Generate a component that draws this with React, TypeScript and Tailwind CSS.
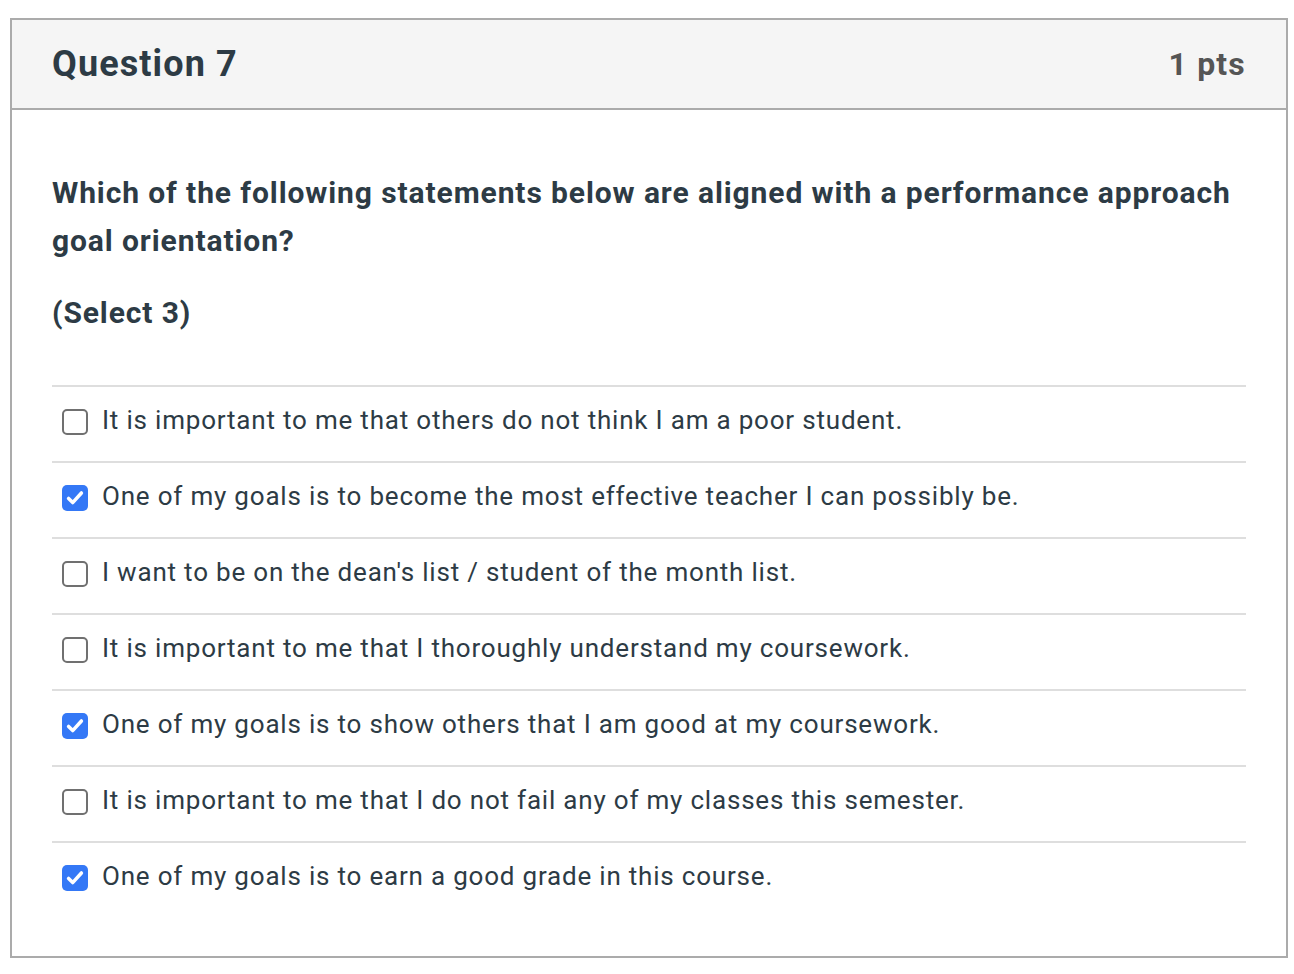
const options = [
  { text: "It is important to me that others do not think I am a poor student.", checked: false },
  { text: "One of my goals is to become the most effective teacher I can possibly be.", checked: true },
  { text: "I want to be on the dean's list / student of the month list.", checked: false },
  { text: "It is important to me that I thoroughly understand my coursework.", checked: false },
  { text: "One of my goals is to show others that I am good at my coursework.", checked: true },
  { text: "It is important to me that I do not fail any of my classes this semester.", checked: false },
  { text: "One of my goals is to earn a good grade in this course.", checked: true },
];

function Checkbox({ checked }: { checked: boolean }) {
  if (checked) {
    return (
      <span className="grid h-[26px] w-[26px] shrink-0 place-items-center rounded-[5px] bg-[#3478f6]">
        <svg viewBox="0 0 24 24" className="h-[22px] w-[22px]" fill="none">
          <path
            d="M5 12.5l4.5 4.5L19 6.5"
            stroke="white"
            strokeWidth="3.8"
            strokeLinecap="round"
            strokeLinejoin="round"
          />
        </svg>
      </span>
    );
  }
  return (
    <span className="h-[26px] w-[26px] shrink-0 rounded-[5px] border-2 border-[#707070] bg-white" />
  );
}

export default function App() {
  return (
    <div
      className="min-h-screen bg-white pl-[10px] pt-[18px]"
      style={{ fontFamily: "Roboto, 'Liberation Sans', sans-serif" }}
    >
      <div className="w-[1278px] border-2 border-[#ababab] text-[#2d3b45]">
        <div className="flex h-[90px] items-center justify-between border-b-2 border-[#ababab] bg-[#f5f5f5] px-[40px]">
          <h2 className="text-[36px] font-bold leading-none tracking-[1.1px]">Question 7</h2>
          <span className="text-[32px] font-bold leading-none tracking-[1.2px] text-[#555]">1 pts</span>
        </div>
        <div className="px-[40px] pb-[39px] pt-[59px]">
          <p className="text-[30px] font-bold leading-[48px] tracking-[0.9px]">
            Which of the following statements below are aligned with a performance approach goal orientation?
          </p>
          <p className="mt-[24px] text-[30px] font-bold leading-[48px] tracking-[0.9px]">(Select 3)</p>
          <ul className="mt-[48px]">
            {options.map((o) => (
              <li
                key={o.text}
                className="flex h-[76px] items-center gap-[14px] border-t-2 border-[#dedede] pb-[5px] pl-[10px]"
              >
                <Checkbox checked={o.checked} />
                <span className="relative -top-[2px] text-[26px] leading-none tracking-[0.8px]">{o.text}</span>
              </li>
            ))}
          </ul>
        </div>
      </div>
    </div>
  );
}
